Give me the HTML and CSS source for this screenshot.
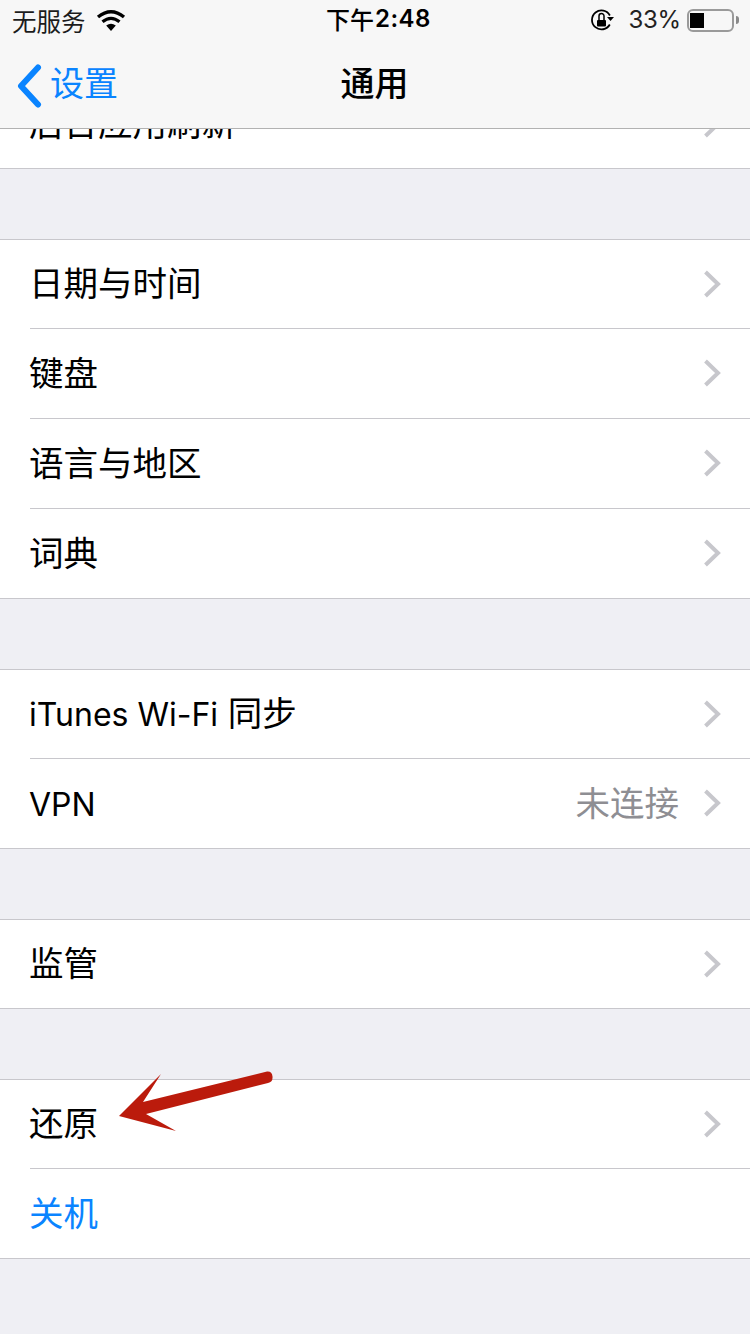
FILE: index.html
```html
<!DOCTYPE html>
<html lang="zh-CN">
<head>
    <meta charset="UTF-8">
    <meta name="viewport" content="width=device-width, initial-scale=1.0">
    <title>通用</title>
    <link rel="stylesheet" href="styles.css">
</head>
<body>
    <header class="top-bar">
        <div class="status-bar">
            <div class="status-left">
                <span>无服务</span>
                <svg class="wifi-icon" width="30" height="22" viewBox="0 0 30 22">
                    <path d="M15 22 10.200 16.600Q15 12.800 19.800 16.600Z" fill="#000"/>
                    <path d="M6.500 12.800Q15 5.800 23.500 12.800" fill="none" stroke="#000" stroke-width="3.200"/>
                    <path d="M2 8Q15 -2.600 28 8" fill="none" stroke="#000" stroke-width="3.400"/>
                </svg>
            </div>
            <div class="status-time">下午<span class="time-digits">2:48</span></div>
            <div class="status-right">
                <svg class="lock-icon" width="24" height="22" viewBox="0 0 24 22">
                    <path d="M18.800 15.500A9.500 9.500 0 1 1 18.900 6.500" fill="none" stroke="#000" stroke-width="1.800"/>
                    <path d="M16 8h7l-3.500 4z" fill="#000"/>
                    <rect x="6" y="11" width="9" height="6.500" rx="1" fill="#000"/>
                    <path d="M8 11.500V7a2.500 2.500 0 0 1 5 0V11.500" fill="none" stroke="#000" stroke-width="1.500"/>
                </svg>
                <span class="battery-text">33%</span>
                <div class="battery">
                    <div class="battery-body"><div class="battery-level"></div></div>
                    <div class="battery-tip"></div>
                </div>
            </div>
        </div>
        <nav class="nav-bar">
            <div class="nav-back">
                <svg width="26" height="44" viewBox="0 0 26 44">
                    <path d="M22 3.500 5 22l17 18.500" fill="none" stroke="#0a84ff" stroke-width="6" stroke-linecap="round" stroke-linejoin="round"/>
                </svg>
                <span>设置</span>
            </div>
            <div class="nav-title">通用</div>
        </nav>
    </header>

    <main>
        <section class="group group-cut">
            <div class="row">
                <span class="row-label">后台应用刷新</span>
                <svg class="chevron" width="18" height="28" viewBox="0 0 18 28"><path d="M2.500 2 15 14 2.500 26" fill="none" stroke="#c7c7cc" stroke-width="4"/></svg>
            </div>
        </section>

        <section class="group">
            <div class="row">
                <span class="row-label">日期与时间</span>
                <svg class="chevron" width="18" height="28" viewBox="0 0 18 28"><path d="M2.500 2 15 14 2.500 26" fill="none" stroke="#c7c7cc" stroke-width="4"/></svg>
            </div>
            <div class="row">
                <span class="row-label">键盘</span>
                <svg class="chevron" width="18" height="28" viewBox="0 0 18 28"><path d="M2.500 2 15 14 2.500 26" fill="none" stroke="#c7c7cc" stroke-width="4"/></svg>
            </div>
            <div class="row">
                <span class="row-label">语言与地区</span>
                <svg class="chevron" width="18" height="28" viewBox="0 0 18 28"><path d="M2.500 2 15 14 2.500 26" fill="none" stroke="#c7c7cc" stroke-width="4"/></svg>
            </div>
            <div class="row">
                <span class="row-label">词典</span>
                <svg class="chevron" width="18" height="28" viewBox="0 0 18 28"><path d="M2.500 2 15 14 2.500 26" fill="none" stroke="#c7c7cc" stroke-width="4"/></svg>
            </div>
        </section>

        <section class="group">
            <div class="row">
                <span class="row-label"><span class="latin">iTunes Wi-Fi</span> 同步</span>
                <svg class="chevron" width="18" height="28" viewBox="0 0 18 28"><path d="M2.500 2 15 14 2.500 26" fill="none" stroke="#c7c7cc" stroke-width="4"/></svg>
            </div>
            <div class="row">
                <span class="row-label row-label-plain"><span class="latin">VPN</span></span>
                <span class="row-value">未连接</span>
                <svg class="chevron" width="18" height="28" viewBox="0 0 18 28"><path d="M2.500 2 15 14 2.500 26" fill="none" stroke="#c7c7cc" stroke-width="4"/></svg>
            </div>
        </section>

        <section class="group">
            <div class="row">
                <span class="row-label">监管</span>
                <svg class="chevron" width="18" height="28" viewBox="0 0 18 28"><path d="M2.500 2 15 14 2.500 26" fill="none" stroke="#c7c7cc" stroke-width="4"/></svg>
            </div>
        </section>

        <section class="group">
            <div class="row">
                <span class="row-label">还原</span>
                <svg class="chevron" width="18" height="28" viewBox="0 0 18 28"><path d="M2.500 2 15 14 2.500 26" fill="none" stroke="#c7c7cc" stroke-width="4"/></svg>
            </div>
            <div class="row">
                <span class="row-label row-link">关机</span>
            </div>
        </section>
    </main>

    <!-- red annotation arrow drawn over the list -->
    <svg class="arrow" width="160" height="64" viewBox="0 0 160 64">
        <path d="M1 45 43 3 25 31 149 0.500Q154 0 154.500 5.500T150 12L28 43 58 60Z" fill="#bb1b0c"/>
    </svg>
</body>
</html>
```

FILE: styles.css
```css
* {
    box-sizing: border-box;
}

html, body {
    margin: 0;
    padding: 0;
}

body {
    position: relative;
    width: 750px;
    height: 1334px;
    overflow: hidden;
    background-color: #efeff4;
    color: #000;
    font-family: "Inter", "Noto Sans CJK SC", sans-serif;
}

.top-bar {
    height: 129px;
    background-color: #f7f7f7;
    border-bottom: 1px solid #b2b2b2;
}

.status-bar {
    display: grid;
    grid-template-columns: 1fr auto 1fr;
    align-items: center;
    height: 40px;
    padding: 0 11px 0 12px;
    font-size: 24px;
}

.status-left {
    display: flex;
    align-items: center;
    gap: 10px;
    color: #1c1c1c;
    font-size: 24.500px;
}

.status-time {
    display: flex;
    align-items: center;
    padding: 0 0 3px 6px;
    font-weight: 500;
}

.time-digits {
    padding-left: 1px;
    letter-spacing: 0.500px;
    font-weight: 600;
}

.status-right {
    display: flex;
    align-items: center;
    justify-content: flex-end;
    color: #222;
}

.lock-icon {
    margin-right: 13px;
}

.battery-text {
    margin-right: 6px;
    padding-bottom: 2px;
    letter-spacing: -0.200px;
}

.battery {
    display: flex;
    align-items: center;
}

.battery-body {
    width: 47px;
    height: 23px;
    padding: 2px 1px;
    border: 2px solid #9a9a9a;
    border-radius: 6px;
}

.battery-level {
    width: 14px;
    height: 100%;
    background-color: #000;
}

.battery-tip {
    width: 3px;
    height: 8px;
    margin-left: 2px;
    background-color: #8a8a8a;
    border-radius: 0 4px 4px 0;
}

.nav-bar {
    position: relative;
    display: flex;
    align-items: center;
    justify-content: center;
    height: 88px;
    padding-bottom: 5px;
}

.nav-back {
    position: absolute;
    left: 16px;
    top: 18px;
    display: flex;
    align-items: center;
    gap: 8px;
    color: #0a84ff;
    font-size: 34px;
    line-height: 52px;
}

.nav-back span {
    padding-bottom: 4px;
}

.nav-title {
    font-size: 34px;
    font-weight: 500;
    padding-right: 1px;
}

.group {
    margin-bottom: 70px;
    background-color: #fff;
    border-top: 1px solid #c8c7cc;
    border-bottom: 1px solid #c8c7cc;
}

.group-cut {
    height: 40px;
    overflow: hidden;
    border-top: 0;
    display: flex;
    flex-direction: column;
    justify-content: flex-end;
}

.row {
    display: flex;
    align-items: center;
    flex-shrink: 0;
    height: 88px;
    margin-left: 30px;
    padding-right: 29px;
    font-size: 34.500px;
}

.row + .row {
    height: 90px;
    border-top: 1px solid #c8c7cc;
}

.row-label {
    flex: 1;
    margin-left: -1px;
    padding-bottom: 6px;
}

.row-label-plain {
    padding-bottom: 0;
}

.latin {
    font-size: 32px;
}

.row-link {
    color: #0a84ff;
}

.row-value {
    margin-right: 24px;
    padding-bottom: 6px;
    color: #8e8e93;
}

.chevron {
    margin-bottom: 1px;
}

.arrow {
    position: absolute;
    left: 118px;
    top: 1071px;
}
```
